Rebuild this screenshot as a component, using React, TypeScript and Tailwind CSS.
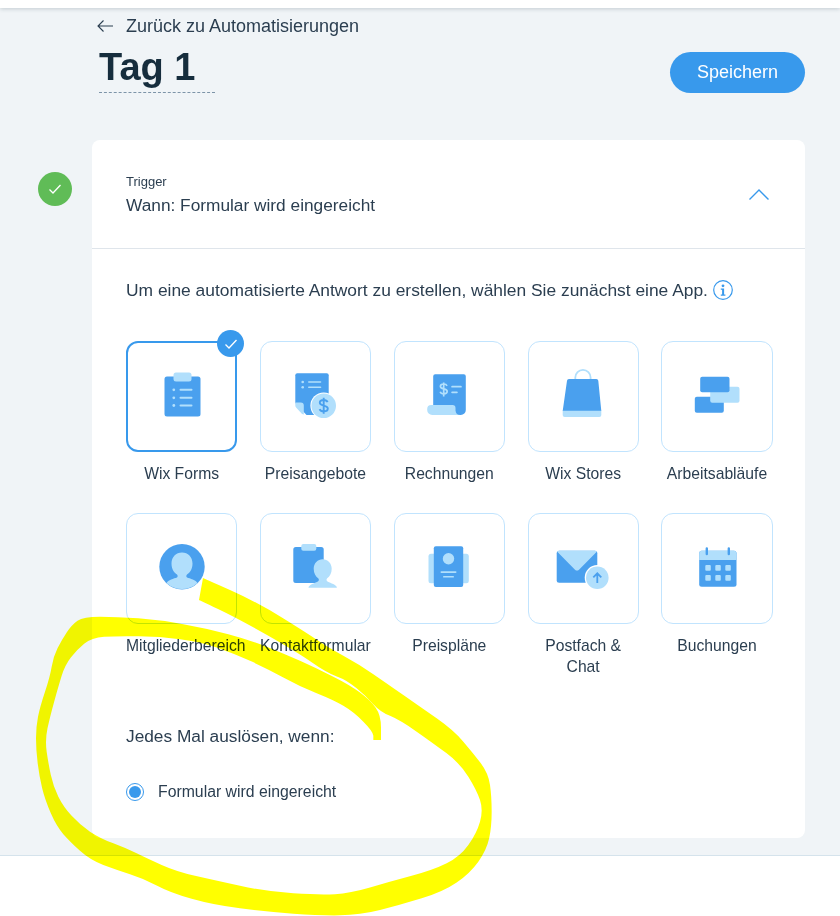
import type { ReactNode } from "react";

const BLUE = "#4aa0ee";
const LIGHT = "#b1dffc";

function ClipboardIcon() {
  return (
    <svg viewBox="0 0 64 64" className="h-16 w-16">
      <rect x="14.5" y="11.5" width="36" height="40" rx="2.5" fill={BLUE} />
      <rect x="23.5" y="7.5" width="18" height="9" rx="2.5" fill={LIGHT} />
      {[24.8, 32.8, 40.5].map((y) => (
        <g key={y}>
          <circle cx="23.8" cy={y} r="1.4" fill={LIGHT} />
          <rect x="29.5" y={y - 1} width="13" height="2" rx="1" fill={LIGHT} />
        </g>
      ))}
    </svg>
  );
}

function QuoteIcon() {
  return (
    <svg viewBox="0 0 64 64" className="h-16 w-16">
      <path d="M14.300 8.300h29.400a2 2 0 0 1 2 2V40L33 50H23.500L12.300 38V10.300a2 2 0 0 1 2-2z" fill={BLUE} />
      <path d="M12.300 37.500h5.500a3 3 0 0 1 3 3v9a3 3 0 0 1-2-.8l-5.500-6a3 3 0 0 1-1-2.200z" fill={LIGHT} />
      <circle cx="40.700" cy="40.700" r="13.300" fill="#fff" />
      <circle cx="40.700" cy="40.700" r="12.300" fill={LIGHT} />
      <path d="M44.600 37.200c-.6-1.400-2.100-2.200-3.900-2.200-2.200 0-3.900 1.100-3.900 2.800 0 3.800 8 1.900 8 5.800 0 1.700-1.800 2.900-4.100 2.900-1.900 0-3.500-.9-4.100-2.400M40.700 32.700v16" fill="none" stroke={BLUE} strokeWidth="1.900" />
      {[17, 22.3].map((y) => (
        <g key={y}>
          <circle cx="19.700" cy={y} r="1.300" fill={LIGHT} />
          <rect x="25" y={y - 0.8} width="13.300" height="1.600" rx="0.800" fill={LIGHT} />
        </g>
      ))}
    </svg>
  );
}

function InvoiceIcon() {
  return (
    <svg viewBox="0 0 64 64" className="h-16 w-16">
      <path d="M18.200 9.300h28.600a2 2 0 0 1 2 2V45a5 5 0 0 1-5 5H16.200V11.300a2 2 0 0 1 2-2z" fill={BLUE} />
      <path d="M14.200 40H35.500a3 3 0 0 1 3 3v2.500a5 5 0 0 0 5 4.500H15.200a5 5 0 0 1-5-5V44a4 4 0 0 1 4-4z" fill={LIGHT} />
      <path d="M30 20.800c-.5-1.200-1.700-1.800-3.300-1.800-1.900 0-3.300.9-3.300 2.400 0 3.200 6.800 1.600 6.800 4.900 0 1.500-1.500 2.500-3.500 2.500-1.600 0-3-.8-3.500-2.100M26.700 17.500v14" fill="none" stroke={LIGHT} strokeWidth="1.700" />
      <rect x="34.200" y="20.800" width="10.600" height="1.800" rx="0.900" fill={LIGHT} />
      <rect x="34.200" y="26.400" width="6.600" height="1.800" rx="0.900" fill={LIGHT} />
    </svg>
  );
}

function BagIcon() {
  return (
    <svg viewBox="0 0 64 64" className="h-16 w-16">
      <path d="M24.300 19v-6.400a7.600 7.600 0 0 1 15.300 0V19" fill="none" stroke={LIGHT} strokeWidth="1.800" />
      <path d="M18 14h27.300a2 2 0 0 1 2 1.800L50.300 46H11.700L16 15.800a2 2 0 0 1 2-1.800z" fill={BLUE} />
      <path d="M11.700 45.700h38.600v4.300a2 2 0 0 1-2 2H13.700a2 2 0 0 1-2-2z" fill={LIGHT} />
    </svg>
  );
}

function WorkflowIcon() {
  return (
    <svg viewBox="0 0 64 64" className="h-16 w-16">
      <rect x="9.800" y="31.700" width="29" height="16" rx="2" fill={BLUE} />
      <rect x="25.200" y="21.700" width="29.300" height="16" rx="2" fill={LIGHT} />
      <rect x="15.200" y="11.700" width="29.300" height="15.600" rx="2" fill={BLUE} />
    </svg>
  );
}

function MemberIcon() {
  return (
    <svg viewBox="0 0 64 64" className="h-16 w-16">
      <circle cx="32" cy="29.700" r="22.700" fill={BLUE} />
      <path d="M16.500 46c1.500-3 7.500-4.500 10.500-5.500 1-1 .8-2.200 0-3-2.500-1.500-5.500-5-5.500-11 0-6.500 4.500-11 10.500-11s10.500 4.500 10.500 11c0 6-3 9.500-5.500 11-.8.800-1 2 0 3 3 1 9 2.500 10.500 5.500a22.700 22.700 0 0 1-31 0z" fill={LIGHT} />
    </svg>
  );
}

function ContactIcon() {
  return (
    <svg viewBox="0 0 64 64" className="h-16 w-16">
      <rect x="10.300" y="10" width="30.400" height="36" rx="2.500" fill={BLUE} />
      <rect x="18.300" y="7" width="15" height="6.700" rx="2" fill={LIGHT} />
      <path d="M26 50.700c-.5 0-.6-.6-.3-1 2-3 8-4 9.500-5.500 1-1 .8-2 0-3-2.500-1.700-4.500-5-4.500-9.500 0-5.500 4-9.500 9-9.500s9 4 9 9.500c0 4.500-2 7.800-4.500 9.500-.8 1-1 2 0 3 1.500 1.500 7.500 2.500 9.500 5.500.3.400.2 1-.3 1z" fill={LIGHT} />
    </svg>
  );
}

function PlansIcon() {
  return (
    <svg viewBox="0 0 64 64" className="h-16 w-16">
      <rect x="11.500" y="16.700" width="40.300" height="29.600" rx="2.500" fill={LIGHT} />
      <rect x="16.800" y="9.300" width="29.400" height="40.700" rx="2" fill={BLUE} />
      <circle cx="31.500" cy="21.700" r="5.700" fill={LIGHT} />
      <rect x="23.500" y="34.200" width="16" height="1.700" rx="0.850" fill={LIGHT} />
      <rect x="26" y="38.900" width="11" height="1.700" rx="0.850" fill={LIGHT} />
    </svg>
  );
}

function InboxIcon() {
  return (
    <svg viewBox="0 0 64 64" className="h-16 w-16">
      <rect x="5.700" y="13.700" width="40.600" height="32" rx="2.500" fill={BLUE} />
      <path d="M6 14.500a2.500 2.500 0 0 1 2.200-.8h35.600a2.500 2.500 0 0 1 2.200.8L28 32.700a3 3 0 0 1-4 0z" fill={LIGHT} />
      <circle cx="46.300" cy="40.700" r="12.600" fill="#fff" />
      <circle cx="46.300" cy="40.700" r="11.300" fill={LIGHT} />
      <path d="M46.300 46v-9.500M42.300 40.300l4-4 4 4" fill="none" stroke={BLUE} strokeWidth="1.800" />
    </svg>
  );
}

function CalendarIcon() {
  return (
    <svg viewBox="0 0 64 64" className="h-16 w-16">
      <rect x="14.200" y="13.700" width="37.300" height="36" rx="2.500" fill={BLUE} />
      <path d="M16.700 13.700h32.300a2.500 2.500 0 0 1 2.500 2.500V23H14.200v-6.800a2.500 2.500 0 0 1 2.500-2.500z" fill={LIGHT} />
      <path d="M21.800 11.500v5.500M43.800 11.500v5.500" stroke={BLUE} strokeWidth="2.400" strokeLinecap="round" />
      {[28, 38].map((y) =>
        [20.300, 30.300, 40.300].map((x) => (
          <rect key={`${x}-${y}`} x={x} y={y} width="5.500" height="5.700" rx="1" fill={LIGHT} />
        ))
      )}
    </svg>
  );
}

const APPS: { label: string; icon: ReactNode; selected?: boolean }[] = [
  { label: "Wix Forms", icon: <ClipboardIcon />, selected: true },
  { label: "Preisangebote", icon: <QuoteIcon /> },
  { label: "Rechnungen", icon: <InvoiceIcon /> },
  { label: "Wix Stores", icon: <BagIcon /> },
  { label: "Arbeitsabläufe", icon: <WorkflowIcon /> },
  { label: "Mitgliederbereich", icon: <MemberIcon /> },
  { label: "Kontaktformular", icon: <ContactIcon /> },
  { label: "Preispläne", icon: <PlansIcon /> },
  { label: "Postfach & Chat", icon: <InboxIcon /> },
  { label: "Buchungen", icon: <CalendarIcon /> },
];

function AppTile({ label, icon, selected }: { label: string; icon: ReactNode; selected?: boolean }) {
  return (
    <div className="flex flex-col items-center text-center">
      <div
        className={
          selected
            ? "relative flex h-[111px] w-full items-center justify-center rounded-xl border-2 border-[#3899ec]"
            : "relative flex h-[111px] w-full items-center justify-center rounded-xl border border-[#c1e4fe]"
        }
      >
        {icon}
        {selected && (
          <span className="absolute -right-[9px] -top-[13px] flex h-[27px] w-[27px] items-center justify-center rounded-full bg-[#3899ec]">
            <svg viewBox="0 0 16 16" className="h-4 w-4" fill="none" stroke="#fff" strokeWidth="1.300">
              <path d="M2.500 8.500l3.500 3.500 7.500-8" />
            </svg>
          </span>
        )}
      </div>
      <div className="mt-[11px] w-full text-[15.7px] leading-[21px] text-[#2b3e50]">{label}</div>
    </div>
  );
}

// marker circle over the screenshot, traced in 3x coordinates.
// a repeated point keeps a corner sharp, everything else gets rounded off
const SCRIBBLE_POINTS: [number, number][] = [
  [1143, 420], [1143, 420], [1143, 345], [1110, 300], [1050, 255], [950, 205], [850, 160], [750, 120], [620, 85],
  [480, 60], [350, 50], [250, 50], [215, 75], [185, 120], [160, 170], [150, 230], [120, 320], [108, 380],
  [108, 450], [118, 530], [135, 600], [170, 680], [210, 725], [270, 780], [350, 810], [430, 835], [510, 878],
  [640, 915], [800, 935], [960, 947], [1080, 945], [1200, 915], [1330, 875], [1410, 820], [1460, 750], [1475, 680],
  [1475, 590], [1465, 520], [1420, 460], [1360, 390], [1260, 320], [1160, 250], [1080, 195], [980, 140], [930, 105],
  [771, 6], [609, -66], [609, -66], [597, 0], [597, 0], [711, 54], [891, 156], [981, 219], [1040, 240], [1100, 290],
  [1140, 335], [1200, 360], [1300, 430], [1380, 490], [1430, 570], [1450, 630], [1430, 700], [1380, 770], [1300, 810],
  [1170, 845], [1050, 880], [960, 885], [800, 875], [640, 840], [530, 815], [440, 775], [380, 745], [300, 715],
  [240, 675], [190, 620], [160, 560], [145, 490], [135, 420], [150, 350], [175, 260], [195, 195], [230, 150],
  [275, 113], [350, 108], [480, 110], [600, 125], [700, 160], [800, 205], [900, 260], [1000, 300], [1060, 335],
  [1120, 395], [1120, 420], [1120, 420],
];

function smoothPath(pts: [number, number][]) {
  const mid = (a: [number, number], b: [number, number]) => `${(a[0] + b[0]) / 2} ${(a[1] + b[1]) / 2}`;
  let d = `M${mid(pts[pts.length - 1], pts[0])}`;
  pts.forEach((p, i) => {
    d += `Q${p[0]} ${p[1]} ${mid(p, pts[(i + 1) % pts.length])}`;
  });
  return d + "Z";
}

export default function App() {
  return (
    <div className="relative flex h-[916px] w-[840px] flex-col overflow-hidden bg-white font-['Liberation_Sans',sans-serif] text-[#2b3e50]">
      <div className="z-10 h-2 bg-white shadow-[0_1px_4px_rgba(22,45,61,0.2)]" />
      <main className="h-[848px] border-b border-[#d5e3ec] bg-[#f0f4f7]">
        <div className="flex items-start justify-between pl-[97px] pr-[35px] pt-[6px]">
          <div>
            <div className="flex h-6 items-center gap-[13px] text-[18px]">
              <svg viewBox="0 0 16 12" className="h-3 w-4" fill="none" stroke="#2b3e50" strokeWidth="1.100">
                <path d="M16 6H1M6.500 .5L1 6l5.500 5.500" />
              </svg>
              <span>Zurück zu Automatisierungen</span>
            </div>
            <h1 className="ml-[2px] mt-[6px] h-[49px] w-[116px] border-b border-dashed border-[#7d94a8] text-[38px] font-bold leading-[46px] text-[#162d3d]">
              Tag 1
            </h1>
          </div>
          <button type="button" className="mt-[38px] h-[41px] w-[135px] rounded-full bg-[#3899ec] text-[18px] text-white">
            Speichern
          </button>
        </div>

        <div className="mt-[47px] flex items-start gap-5 pl-[38px] pr-[35px]">
          <div className="mt-8 flex h-[34px] w-[34px] shrink-0 items-center justify-center rounded-full bg-[#60bc57]">
            <svg viewBox="0 0 16 16" className="h-4 w-4" fill="none" stroke="#fff" strokeWidth="1.300">
              <path d="M2.500 8.500l3.500 3.500 7.500-8" />
            </svg>
          </div>

          <section className="h-[698px] w-[713px] rounded-lg bg-white">
            <header className="flex h-[109px] items-center justify-between border-b border-[#dfe5eb] pl-[34px] pr-[36px]">
              <div className="mt-[1px]">
                <div className="text-[13px] leading-[18px]">Trigger</div>
                <div className="mt-[2px] text-[17.3px] leading-6">Wann: Formular wird eingereicht</div>
              </div>
              <svg viewBox="0 0 20 11" className="h-[11px] w-5" fill="none" stroke="#3899ec" strokeWidth="1.400">
                <path d="M.5 10.500L10 1l9.500 9.500" />
              </svg>
            </header>

            <div className="px-[34px] pt-[29px]">
              <div className="flex h-6 items-center gap-[5px] text-[17.4px]">
                <span>Um eine automatisierte Antwort zu erstellen, wählen Sie zunächst eine App.</span>
                <svg viewBox="0 0 20 20" className="h-5 w-5" fill="none">
                  <circle cx="10" cy="10" r="9.300" stroke="#3899ec" strokeWidth="1.200" />
                  <circle cx="10" cy="5.800" r="1.400" fill="#3899ec" />
                  <path d="M7.800 8.600h3.300v6h1.300v1.100H7.800v-1.100h1.300V9.700H7.800z" fill="#3899ec" />
                </svg>
              </div>

              <div className="mt-[39px] grid w-[646.6px] grid-cols-5 gap-x-[22.65px] gap-y-[29px]">
                {APPS.map((a) => (
                  <AppTile key={a.label} label={a.label} icon={a.icon} selected={a.selected} />
                ))}
              </div>

              <div className="mt-[47px] text-[17.3px] leading-6">Jedes Mal auslösen, wenn:</div>

              <div className="mt-[34px] flex items-center gap-[14px]">
                <span className="flex h-[18px] w-[18px] items-center justify-center rounded-full border border-[#3899ec]">
                  <span className="h-3 w-3 rounded-full bg-[#3899ec]" />
                </span>
                <span className="text-[15.8px] leading-5">Formular wird eingereicht</span>
              </div>
            </div>
          </section>
        </div>
      </main>

      <svg
        viewBox="0 0 1560 948"
        className="pointer-events-none absolute left-0 top-[600px] z-20 h-[316px] w-[520px] overflow-visible mix-blend-multiply"
      >
        <path d={smoothPath(SCRIBBLE_POINTS)} fill="#ffff00" />
      </svg>
    </div>
  );
}
